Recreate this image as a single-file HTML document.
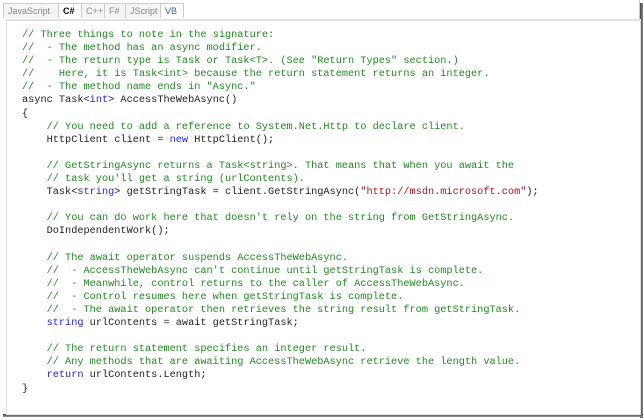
<!DOCTYPE html>
<html><head><style>
body{margin:0;width:644px;height:420px;background:#fff;position:relative;overflow:hidden;font-family:"Liberation Sans",sans-serif}
.frame{position:absolute;left:5px;top:0;width:634px;height:413px;border-right:1px solid #ccc;}
.shadowR{position:absolute;left:640px;top:3px;width:3px;height:415px;background:linear-gradient(to right,#444,#888);}
.shadowB{position:absolute;left:3px;top:414px;width:640px;height:3px;background:linear-gradient(to bottom,#444,#999);}
.box{position:absolute;left:6px;top:19px;width:633px;height:393px;border:1px solid #ddd;border-top:2px solid #e2e2e2;background:#fff}
.tabs{position:absolute;left:3px;top:3px;height:15px;display:flex;font-size:9px}
.tabs span{border:1px solid #ccc;border-bottom:none;background:#f4f4f4;color:#888;padding:0 4px;line-height:14px;margin-right:-1px}
.tabs span.on{background:#fff;color:#000;font-weight:bold}
.tabs span.vb{color:#4060a0;background:#fff}
pre{position:absolute;left:22px;top:29px;margin:0;font-family:"Liberation Mono",monospace;font-size:10.25px;line-height:13.1px;color:#222}
.c{color:#1f8a1f}.k{color:#1f1fdd}.s{color:#a31515}
</style></head><body>
<div class="frame"></div>
<div class="shadowR"></div><div class="shadowB"></div>
<div class="box"></div>
<div class="tabs"><span style="width:46px">JavaScript</span><span class="on" style="width:14px">C#</span><span style="width:14px">C++</span><span style="width:12px">F#</span><span style="width:26px">JScript</span><span class="vb" style="width:14px">VB</span></div>
<pre><span class="c">// Three things to note in the signature:
//  - The method has an async modifier.
//  - The return type is Task or Task&lt;T&gt;. (See "Return Types" section.)
//    Here, it is Task&lt;int&gt; because the return statement returns an integer.
//  - The method name ends in "Async."</span>
async Task&lt;<span class="k">int</span>&gt; AccessTheWebAsync()
{
    <span class="c">// You need to add a reference to System.Net.Http to declare client.</span>
    HttpClient client = <span class="k">new</span> HttpClient();

    <span class="c">// GetStringAsync returns a Task&lt;string&gt;. That means that when you await the
    // task you'll get a string (urlContents).</span>
    Task&lt;<span class="k">string</span>&gt; getStringTask = client.GetStringAsync(<span class="s">"http://msdn.microsoft.com"</span>);

    <span class="c">// You can do work here that doesn't rely on the string from GetStringAsync.</span>
    DoIndependentWork();

    <span class="c">// The await operator suspends AccessTheWebAsync.
    //  - AccessTheWebAsync can't continue until getStringTask is complete.
    //  - Meanwhile, control returns to the caller of AccessTheWebAsync.
    //  - Control resumes here when getStringTask is complete.
    //  - The await operator then retrieves the string result from getStringTask.</span>
    <span class="k">string</span> urlContents = await getStringTask;

    <span class="c">// The return statement specifies an integer result.
    // Any methods that are awaiting AccessTheWebAsync retrieve the length value.</span>
    <span class="k">return</span> urlContents.Length;
}</pre>
</body></html>
